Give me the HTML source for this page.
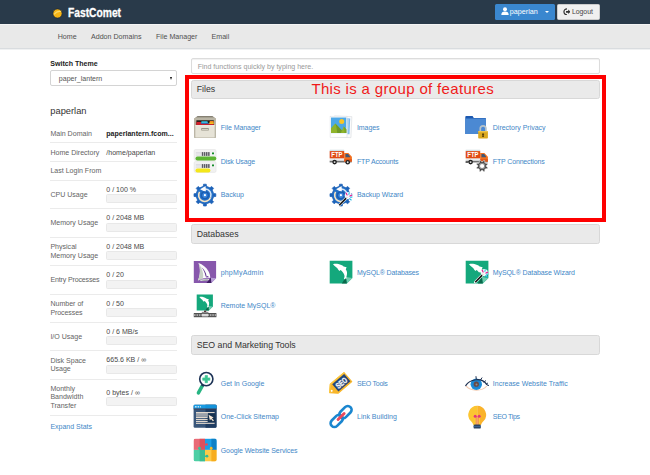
<!DOCTYPE html>
<html><head><meta charset="utf-8"><title>cPanel</title>
<style>
*{box-sizing:border-box;margin:0;padding:0}
html,body{width:650px;height:475px;overflow:hidden;background:#fff}
body{position:relative;font-family:"Liberation Sans",sans-serif;font-size:7.05px;color:#333}
.a{position:absolute;white-space:nowrap;line-height:1}
#top{left:0;top:0;width:650px;height:24px;background:#293a4a}
#nav{left:0;top:24px;width:650px;height:25.4px;background:#e9e9e9;border-top:1px solid #f4f4f4;border-bottom:1px solid #d9dcdf;box-shadow:0 1px 0 #f0f1f2}
.navi{top:33.6px;font-size:7.1px;color:#505050}
#logo{left:68.4px;top:7.1px;font-size:12px;font-weight:bold;color:#fff;transform:scaleX(0.855);transform-origin:0 0;-webkit-text-stroke:0.3px #fff}
#ubtn{left:495.2px;top:3.6px;width:59.8px;height:16px;background:#3a87cf;border-radius:1.5px;color:#fff}
#lbtn{left:556.7px;top:3.6px;width:43.2px;height:16.3px;background:#f0f0f0;border:1px solid #ccc;border-radius:1.5px;color:#333}
.hd{left:190.7px;width:409.3px;height:19px;background:#eaeaea;border:1px solid #d8d8d8;border-radius:2.5px;font-size:8.75px;color:#333;padding:4.3px 0 0 5px}
.lk{color:#4287c7;font-size:7.0px}
.sep{left:50px;width:127px;height:1px;background:#ebebeb}
.bar{left:106.2px;width:70.5px;height:9px;background:#f3f3f3;border:0.5px solid #e8e8e8;border-radius:1.5px;}
.lb{left:50.4px;color:#646464;font-size:7.05px;line-height:8.6px;white-space:normal;width:56px}
.vl{left:106.3px;color:#484848;font-size:7.05px}
svg.ic{position:absolute;width:24px;height:24px;overflow:visible}
</style></head><body>
<div class="a" id="top"></div>
<div class="a" id="nav"></div>
<svg class="a" style="left:51.5px;top:7.6px" width="11" height="11" viewBox="0 0 11 11"><circle cx="5.5" cy="5.5" r="4.6" fill="#f7b515" stroke="#1b2836" stroke-width="0.7"/><path d="M2 6.5 Q5 2.5 9 3.5" stroke="#fbd96a" stroke-width="1.2" fill="none"/></svg>
<div class="a" id="logo">FastComet</div>
<div class="a" id="ubtn"><svg class="a" style="left:5.5px;top:3.5px" width="8" height="8" viewBox="0 0 8 8"><circle cx="4" cy="2.2" r="2" fill="#fff"/><path d="M0.3 8 Q0.3 4.6 4 4.6 Q7.7 4.6 7.7 8Z" fill="#fff"/></svg><span class="a" style="left:14.6px;top:4.6px;font-size:7.2px">paperlan</span><span class="a" style="left:50px;top:7px;width:0;height:0;border-left:2px solid transparent;border-right:2px solid transparent;border-top:2.2px solid #fff"></span></div>
<div class="a" id="lbtn"><svg class="a" style="left:5px;top:3.2px" width="7.6" height="7.6" viewBox="0 0 8 8"><path d="M4.2 0.8 A3.2 3.2 0 1 0 4.2 7.2" stroke="#333" stroke-width="1.3" fill="none"/><path d="M3.2 3.1 H5.5 V1.6 L8 4 L5.5 6.4 V4.9 H3.2Z" fill="#333"/></svg><span class="a" style="left:14.2px;top:4.7px;font-size:6.9px;color:#444">Logout</span></div>
<div class="a navi" style="left:57.7px">Home</div>
<div class="a navi" style="left:91px">Addon Domains</div>
<div class="a navi" style="left:156px">File Manager</div>
<div class="a navi" style="left:211.5px">Email</div>

<!-- sidebar -->
<div class="a" style="left:50.3px;top:60px;font-weight:bold;font-size:7.05px;color:#222">Switch Theme</div>
<div class="a" style="left:50.3px;top:70.2px;width:126.5px;height:16.2px;border:1px solid #d4d4d4;border-radius:2px;background:#fff"><span class="a" style="left:7.5px;top:4.2px;font-size:7.05px;color:#555">paper_lantern</span><span class="a" style="left:119.2px;top:5.4px;width:0;height:0;border-left:1.7px solid transparent;border-right:1.7px solid transparent;border-top:3.4px solid #111"></span></div>
<div class="a" style="left:50.3px;top:106.6px;font-size:9.3px;color:#333">paperlan</div>

<div class="a lb" style="top:130.13px;width:auto;white-space:nowrap;line-height:1">Main Domain</div>
<div class="a vl" style="top:130.13px;font-weight:bold;color:#222">paperlantern.fcom...</div>
<div class="a sep" style="top:142.3px"></div>
<div class="a lb" style="top:149.13px;width:auto;white-space:nowrap;line-height:1">Home Directory</div>
<div class="a vl" style="top:149.13px">/home/paperlan</div>
<div class="a sep" style="top:161.3px"></div>
<div class="a lb" style="top:167.13px;width:auto;white-space:nowrap;line-height:1">Last Login From</div>
<div class="a sep" style="top:179.7px"></div>
<div class="a lb" style="top:191.13px;width:auto;white-space:nowrap;line-height:1">CPU Usage</div>
<div class="a vl" style="top:186.13px">0 / 100 %</div>
<div class="a bar" style="top:194.4px"></div>
<div class="a sep" style="top:208.3px"></div>
<div class="a lb" style="top:219.13px;width:auto;white-space:nowrap;line-height:1">Memory Usage</div>
<div class="a vl" style="top:214.13px">0 / 2048 MB</div>
<div class="a bar" style="top:222.9px"></div>
<div class="a sep" style="top:236.7px"></div>
<div class="a lb" style="top:243.13px;width:auto;white-space:nowrap;line-height:1">Physical</div>
<div class="a lb" style="top:252.13px;width:auto;white-space:nowrap;line-height:1">Memory Usage</div>
<div class="a vl" style="top:243.13px">0 / 2048 MB</div>
<div class="a bar" style="top:251.3px"></div>
<div class="a sep" style="top:265.2px"></div>
<div class="a lb" style="top:276.13px;width:auto;white-space:nowrap;line-height:1;letter-spacing:-0.15px">Entry Processes</div>
<div class="a vl" style="top:271.13px">0 / 20</div>
<div class="a bar" style="top:279.6px"></div>
<div class="a sep" style="top:293.6px"></div>
<div class="a lb" style="top:300.13px;width:auto;white-space:nowrap;line-height:1">Number of</div>
<div class="a lb" style="top:309.13px;width:auto;white-space:nowrap;line-height:1;letter-spacing:-0.1px">Processes</div>
<div class="a vl" style="top:300.13px">0 / 50</div>
<div class="a bar" style="top:308px"></div>
<div class="a sep" style="top:322px"></div>
<div class="a lb" style="top:333.13px;width:auto;white-space:nowrap;line-height:1">I/O Usage</div>
<div class="a vl" style="top:328.13px">0 / 6 MB/s</div>
<div class="a bar" style="top:336.3px"></div>
<div class="a sep" style="top:350.3px"></div>
<div class="a lb" style="top:357.13px;width:auto;white-space:nowrap;line-height:1">Disk Space</div>
<div class="a lb" style="top:365.13px;width:auto;white-space:nowrap;line-height:1">Usage</div>
<div class="a vl" style="top:356.13px">665.6 KB / ∞</div>
<div class="a bar" style="top:364.6px"></div>
<div class="a sep" style="top:378.8px"></div>
<div class="a lb" style="top:385.13px;width:auto;white-space:nowrap;line-height:1">Monthly</div>
<div class="a lb" style="top:393.13px;width:auto;white-space:nowrap;line-height:1">Bandwidth</div>
<div class="a lb" style="top:402.13px;width:auto;white-space:nowrap;line-height:1">Transfer</div>
<div class="a vl" style="top:389.13px">0 bytes / ∞</div>
<div class="a bar" style="top:397.4px"></div>
<div class="a sep" style="top:415.2px"></div>
<div class="a lk" style="left:50.4px;top:423.17px">Expand Stats</div>

<!-- main -->
<div class="a" style="left:190.7px;top:57.9px;width:409.3px;height:16.2px;border:1px solid #dcdcdc;border-radius:2px;background:#fff;box-shadow:inset 0 1px 1px rgba(0,0,0,.06)"><span class="a" style="left:6px;top:4.1px;font-size:7.05px;color:#999">Find functions quickly by typing here.</span></div>

<div class="a hd" style="top:79.9px;height:19.2px">Files</div>
<div class="a" style="left:185px;top:75px;width:421px;height:147px;border:4px solid #fe0000"></div>
<div class="a" style="left:311.4px;top:80.5px;font-size:15px;color:#f01a1a;letter-spacing:0.34px">This is a group of features</div>

<div class="a hd" style="top:224.2px;height:20px;padding-top:4.8px">Databases</div>
<div class="a hd" style="top:335.2px;height:19.8px;padding-top:4.7px">SEO and Marketing Tools</div>

<svg class="ic" style="left:193.3px;top:114.8px" viewBox="0 0 24 24"><path d="M4.6 1.2 H19.4 L22.9 3.6 V22.2 Q22.9 23.1 22 23.1 H2 Q1.1 23.1 1.1 22.2 V3.6Z" fill="#b4af9e"/>
<path d="M4.6 1.2 H19.4 L21.4 2.6 H2.6Z" fill="#6f6a5d"/>
<path d="M2.6 2.6 H21.4 L22.9 3.6 V5.6 H1.1 V3.6Z" fill="#bab5a5"/>
<rect x="3.4" y="5.3" width="17.4" height="5" fill="#1d1714"/>
<rect x="3.4" y="6.9" width="4.6" height="3.2" fill="#d3202b"/>
<rect x="8.2" y="6.3" width="6.6" height="2.2" rx="0.8" fill="#35c6e8"/>
<rect x="8" y="7.9" width="9" height="1.4" fill="#3a62a8"/>
<rect x="16.6" y="5.9" width="4.2" height="2" rx="0.6" fill="#f08a1d"/>
<rect x="16.2" y="7.6" width="4.6" height="1.5" fill="#f5d020"/>
<rect x="3.4" y="8.9" width="17.4" height="1.4" fill="#c9202b"/>
<rect x="2.3" y="10.2" width="19.4" height="12.3" rx="0.6" fill="#e6e3d7"/>
<rect x="2.3" y="10.2" width="19.4" height="1" fill="#f3f1e8"/>
<rect x="8.3" y="12.9" width="7.4" height="2.5" rx="0.5" fill="#8f8b7e"/>
<rect x="8.9" y="13.9" width="6.2" height="1.3" fill="#d2cfc2"/></svg>
<div class="a lk" style="left:220.7px;top:124.17px;letter-spacing:-0.055px">File Manager</div>
<svg class="ic" style="left:329.2px;top:115.1px" viewBox="0 0 24 24"><g transform="rotate(2.5 12 12)"><rect x="5" y="1.2" width="17.4" height="21" fill="#fbfbfc" stroke="#cfd3d8" stroke-width="0.5"/><rect x="6.2" y="3" width="14.6" height="15.8" fill="#7fbaec"/><rect x="18" y="3" width="1.4" height="15.8" fill="#b9daf5"/></g>
<rect x="1.1" y="1.2" width="16.9" height="21" fill="#fff" stroke="#d5d9dd" stroke-width="0.5"/>
<rect x="2" y="2.5" width="15.3" height="15.6" fill="#4da8e8"/>
<circle cx="12.7" cy="6.4" r="2.5" fill="#fbc524"/>
<path d="M2 18.1 V13.2 L6.3 8.4 L9.2 11.6 L12.9 15.4 L14.8 11.6 L17.3 14.6 V18.1Z" fill="#8fb42c"/>
<path d="M6.3 8.4 L9.2 11.6 L12.9 15.4 L11.8 18.1 H8.2 L7.4 12Z" fill="#6f9a28"/>
<path d="M14.8 11.6 L17.3 14.6 V18.1 H15.6Z" fill="#7aa52a"/></svg>
<div class="a lk" style="left:357.0px;top:124.17px;letter-spacing:-0.078px">Images</div>
<svg class="ic" style="left:465.2px;top:115.1px" viewBox="0 0 24 24"><path d="M0.9 1.1 H7.6 L8.8 2.9 H20.8 V18.9 H0.3 V1.7Z" fill="#1c58b0"/>
<rect x="0.3" y="3.6" width="20.5" height="15.3" rx="0.5" fill="#4b89d3"/>
<path d="M15.3 16.6 V13.6 A2.8 2.8 0 0 1 20.9 13.6 V16.6" fill="none" stroke="#b7c2c8" stroke-width="1.7"/>
<rect x="13.2" y="16" width="9.7" height="7.6" rx="0.8" fill="#dba91f"/>
<rect x="13.2" y="16" width="9.7" height="1.3" rx="0.6" fill="#eec64b"/>
<path d="M18.05 18.3 a1.1 1.1 0 0 1 0.6 2 L19 22 H17.1 L17.45 20.3 a1.1 1.1 0 0 1 0.6 -2Z" fill="#5a4308"/></svg>
<div class="a lk" style="left:492.8px;top:124.17px;letter-spacing:-0.006px">Directory Privacy</div>
<svg class="ic" style="left:193.3px;top:149.4px" viewBox="0 0 24 24"><rect x="1.1" y="0.5" width="22" height="10.9" rx="1.4" fill="#f1f1f1" stroke="#dcdcdc" stroke-width="0.4"/>
<g fill="#d6d6dc"><rect x="2.8" y="3.2" width="5.6" height="0.7"/><rect x="2.8" y="4.5" width="5.6" height="0.7"/><rect x="2.8" y="5.8" width="5.6" height="0.7"/></g>
<g fill="#5a5a62"><rect x="8.8" y="3.1" width="1.5" height="3.8"/><rect x="10.9" y="3.1" width="1.5" height="3.8"/><rect x="13" y="3.1" width="1.5" height="3.8"/><rect x="15.1" y="3.1" width="1.5" height="3.8"/></g>
<circle cx="20" cy="4.4" r="1.6" fill="#fff"/><circle cx="20" cy="4.4" r="1.1" fill="#168a2a"/>
<rect x="2.5" y="7.5" width="20.8" height="3.9" rx="1.9" fill="#5db533"/>

<rect x="1.1" y="12.5" width="22" height="10.9" rx="1.4" fill="#f1f1f1" stroke="#dcdcdc" stroke-width="0.4"/>
<g fill="#d6d6dc"><rect x="2.8" y="15.2" width="5.6" height="0.7"/><rect x="2.8" y="16.5" width="5.6" height="0.7"/><rect x="2.8" y="17.8" width="5.6" height="0.7"/></g>
<g fill="#5a5a62"><rect x="8.8" y="15.1" width="1.5" height="3.8"/><rect x="10.9" y="15.1" width="1.5" height="3.8"/><rect x="13" y="15.1" width="1.5" height="3.8"/><rect x="15.1" y="15.1" width="1.5" height="3.8"/></g>
<circle cx="20" cy="16.4" r="1.6" fill="#fff"/><circle cx="20" cy="16.4" r="1.1" fill="#168a2a"/>
<rect x="2.5" y="19.5" width="14.9" height="3.9" rx="1.9" fill="#f4e71a"/></svg>
<div class="a lk" style="left:220.7px;top:158.17px;letter-spacing:-0.160px">Disk Usage</div>
<svg class="ic" style="left:329.2px;top:149.4px" viewBox="0 0 24 24"><rect x="0.7" y="0.8" width="14.5" height="12.4" fill="#ececec"/>
<rect x="0.7" y="0.8" width="14.5" height="1.3" fill="#d3e3ea"/>
<rect x="0.7" y="11.2" width="14.5" height="1.3" fill="#cdcdcd"/>
<rect x="0.7" y="12.4" width="22" height="0.9" fill="#2a2a2a"/>
<path d="M15.2 3.9 H19.4 L22.9 7.8 V12.6 H15.2Z" fill="#f2701f"/>
<path d="M15.2 10.2 H22.9 V12.6 H15.2Z" fill="#dd5519"/>
<path d="M16.5 5.1 H19.1 L21 7.6 V8.3 H16.5Z" fill="#3f5878"/>
<rect x="0.7" y="2.1" width="14.5" height="7.2" fill="#e04b14"/>
<text x="7.9" y="8.3" font-family="Liberation Sans,sans-serif" font-size="6.6" font-weight="bold" fill="#fff" text-anchor="middle" textLength="11.2" lengthAdjust="spacingAndGlyphs">FTP</text>
<circle cx="5.6" cy="13.1" r="2.3" fill="#1f1f1f"/><circle cx="5.6" cy="13.1" r="0.95" fill="#e8e8e8"/>
<circle cx="18.7" cy="13.2" r="2.3" fill="#1f1f1f"/><circle cx="18.7" cy="13.2" r="0.95" fill="#e8e8e8"/></svg>
<div class="a lk" style="left:357.0px;top:158.17px;letter-spacing:-0.171px">FTP Accounts</div>
<svg class="ic" style="left:465.2px;top:149.4px" viewBox="0 0 24 24"><rect x="0.7" y="0.8" width="14.5" height="12.4" fill="#ececec"/>
<rect x="0.7" y="0.8" width="14.5" height="1.3" fill="#d3e3ea"/>
<rect x="0.7" y="11.2" width="14.5" height="1.3" fill="#cdcdcd"/>
<rect x="0.7" y="12.4" width="22" height="0.9" fill="#2a2a2a"/>
<path d="M15.2 3.9 H19.4 L22.9 7.8 V12.6 H15.2Z" fill="#f2701f"/>
<path d="M15.2 10.2 H22.9 V12.6 H15.2Z" fill="#dd5519"/>
<path d="M16.5 5.1 H19.1 L21 7.6 V8.3 H16.5Z" fill="#3f5878"/>
<rect x="0.7" y="2.1" width="14.5" height="7.2" fill="#e04b14"/>
<text x="7.9" y="8.3" font-family="Liberation Sans,sans-serif" font-size="6.6" font-weight="bold" fill="#fff" text-anchor="middle" textLength="11.2" lengthAdjust="spacingAndGlyphs">FTP</text>
<circle cx="5.6" cy="13.1" r="2.3" fill="#1f1f1f"/><circle cx="5.6" cy="13.1" r="0.95" fill="#e8e8e8"/>


<path d="M0.6 13.3 H3" stroke="#2b2b2b" stroke-width="0.8"/>
<path d="M21.52 17.84 L22.78 18.60 L22.25 19.88 L20.82 19.53 L19.63 20.72 L19.98 22.15 L18.70 22.68 L17.94 21.42 L16.26 21.42 L15.50 22.68 L14.22 22.15 L14.57 20.72 L13.38 19.53 L11.95 19.88 L11.42 18.60 L12.68 17.84 L12.68 16.16 L11.42 15.40 L11.95 14.12 L13.38 14.47 L14.57 13.28 L14.22 11.85 L15.50 11.32 L16.26 12.58 L17.94 12.58 L18.70 11.32 L19.98 11.85 L19.63 13.28 L20.82 14.47 L22.25 14.12 L22.78 15.40 L21.52 16.16Z" fill="#444" stroke="#fff" stroke-width="0.5"/>
<circle cx="17.1" cy="17.0" r="3.3" fill="#8a8a8a"/>
<circle cx="17.1" cy="17.0" r="2.1" fill="#fff"/></svg>
<div class="a lk" style="left:492.8px;top:158.17px;letter-spacing:-0.150px">FTP Connections</div>
<svg class="ic" style="left:193.3px;top:182.7px" viewBox="0 0 24 24"><path d="M20.66 10.50 L22.81 10.72 L22.81 13.48 L20.66 13.70 L19.22 17.16 L20.59 18.84 L18.64 20.79 L16.96 19.42 L13.50 20.86 L13.28 23.01 L10.52 23.01 L10.30 20.86 L6.84 19.42 L5.16 20.79 L3.21 18.84 L4.58 17.16 L3.14 13.70 L0.99 13.48 L0.99 10.72 L3.14 10.50 L4.58 7.04 L3.21 5.36 L5.16 3.41 L6.84 4.78 L10.30 3.34 L10.52 1.19 L13.28 1.19 L13.50 3.34 L16.96 4.78 L18.64 3.41 L20.59 5.36 L19.22 7.04Z" fill="#1c62b8" stroke="#1c62b8" stroke-width="0.7" stroke-linejoin="round"/>
<circle cx="11.9" cy="12.1" r="8.2" fill="#2571c7"/>
<path d="M11.9 5.9 A6.2 6.2 0 0 1 17.6 14.5" fill="none" stroke="#d6e6f7" stroke-width="1.5"/>
<path d="M17.6 14.5 A6.2 6.2 0 1 1 6.6 8.9" fill="none" stroke="#f7e4c4" stroke-width="1.6"/>
<path d="M12.6 3.1 L7.1 6.3 L12.9 9.2Z" fill="#fafbfd"/>
<circle cx="11.9" cy="12.3" r="4.1" fill="#1a5db2"/>
<circle cx="11.9" cy="12.3" r="2.6" fill="#3b86dc"/>
<circle cx="11.9" cy="12.2" r="1.1" fill="#fff"/></svg>
<div class="a lk" style="left:220.7px;top:191.17px;letter-spacing:-0.010px">Backup</div>
<svg class="ic" style="left:329.2px;top:182.7px" viewBox="0 0 24 24"><path d="M20.66 10.50 L22.81 10.72 L22.81 13.48 L20.66 13.70 L19.22 17.16 L20.59 18.84 L18.64 20.79 L16.96 19.42 L13.50 20.86 L13.28 23.01 L10.52 23.01 L10.30 20.86 L6.84 19.42 L5.16 20.79 L3.21 18.84 L4.58 17.16 L3.14 13.70 L0.99 13.48 L0.99 10.72 L3.14 10.50 L4.58 7.04 L3.21 5.36 L5.16 3.41 L6.84 4.78 L10.30 3.34 L10.52 1.19 L13.28 1.19 L13.50 3.34 L16.96 4.78 L18.64 3.41 L20.59 5.36 L19.22 7.04Z" fill="#1c62b8" stroke="#1c62b8" stroke-width="0.7" stroke-linejoin="round"/>
<circle cx="11.9" cy="12.1" r="8.2" fill="#2571c7"/>
<path d="M11.9 5.9 A6.2 6.2 0 0 1 17.6 14.5" fill="none" stroke="#d6e6f7" stroke-width="1.5"/>
<path d="M17.6 14.5 A6.2 6.2 0 1 1 6.6 8.9" fill="none" stroke="#f7e4c4" stroke-width="1.6"/>
<path d="M12.6 3.1 L7.1 6.3 L12.9 9.2Z" fill="#fafbfd"/>
<circle cx="11.9" cy="12.3" r="4.1" fill="#1a5db2"/>
<circle cx="11.9" cy="12.3" r="2.6" fill="#3b86dc"/>
<circle cx="11.9" cy="12.2" r="1.1" fill="#fff"/>

<circle cx="19.3" cy="12.6" r="3.6" fill="#fff" opacity="0.93"/>
<path d="M10.2 22.2 L18.3 14" stroke="#fff" stroke-width="2.5" stroke-linecap="round"/>
<path d="M10.2 22.2 L17.2 15.1" stroke="#141414" stroke-width="1.5" stroke-linecap="butt"/>
<path d="M17.2 15.1 L18.4 13.9" stroke="#d9d9d9" stroke-width="1.5"/>
<g stroke-width="1.15" stroke-linecap="round"><path d="M17.2 10.2 L18.1 12" stroke="#e6178f"/><path d="M20.3 9.7 L19.9 11.4" stroke="#3cc4ee"/><path d="M22.6 12.2 L21 13.1" stroke="#e6178f"/><path d="M22.9 14.2 L21.6 14.4" stroke="#3cc4ee"/><path d="M22.2 17 L20.6 15.8" stroke="#22b8e8"/></g></svg>
<div class="a lk" style="left:357.0px;top:191.17px;letter-spacing:-0.068px">Backup Wizard</div>
<svg class="ic" style="left:193.3px;top:260.0px" viewBox="0 0 24 24"><path d="M0.8 0.9 H23.1 V18.2 L18.3 23 H0.8Z" fill="#8757ac"/>
<path d="M23.1 18.2 L18.3 23 L17.9 17.8Z" fill="#b9a0d8"/>
<path d="M18.3 23 L17.9 17.8 L13.4 23Z" fill="#3f1e63"/>
<path d="M5.5 3 C9.5 4.2 13.4 7.4 15.6 11.4 C16.8 13.6 17.3 15.8 17.2 18 C13.8 17.2 8.6 18 4.9 20.4 C7.4 15.2 7.6 8.6 5.5 3Z" fill="#fbfbfc"/>
<path d="M5.5 3 C8.6 7.6 10.6 12.8 10.2 16.4 C10 18 9.2 19 8.1 19.6 L4.9 20.4 C7.4 15.2 7.6 8.6 5.5 3Z" fill="#c6cfc4"/>
<path d="M8.4 7.2 C11.2 9.4 13.2 12.6 13.6 16.2 L12.6 16.4 C12.2 13 10.6 9.8 8.4 7.2Z" fill="#5b2d8a"/>
<path d="M13 16.6 C13.8 15.6 15.2 15.8 15.8 17 L13.4 17.6Z" fill="#6a3a9a"/>
<path d="M6.6 20.4 C9.6 18.6 13.6 18.4 16.4 19 C15.6 21 9.4 21.8 6.6 20.4Z" fill="#dcdde0"/>
<path d="M8.2 20.2 C10.4 19.4 13 19.3 15 19.6 L14.4 20.4 C12.4 20.8 10 20.8 8.2 20.2Z" fill="#8b8f96"/></svg>
<div class="a lk" style="left:220.7px;top:269.17px;letter-spacing:0.194px">phpMyAdmin</div>
<svg class="ic" style="left:329.2px;top:260.0px" viewBox="0 0 24 24"><path d="M0.7 0.8 H23.4 V17.9 L17.799999999999997 23.5 H0.7Z" fill="#14a87c"/>
<path d="M23.4 17.9 L17.799999999999997 23.5 L16.96 17.060000000000002Z" fill="#6fcdb0"/>
<path d="M17.799999999999997 23.5 L16.96 17.060000000000002 L12.76 23.5Z" fill="#0a684b"/>
<g transform="translate(0,0) scale(1.0)">
<path d="M4 4.2 C5.6 3.7 7.6 3.8 9.4 4.1 C11.4 4.5 13.2 5.4 14.6 6.5 L17.6 7.2 C17.2 8 16.9 8.8 16.8 9.6 C17.8 11 18.2 12.4 18 13.8 C17.9 15 17.7 16.2 17.3 17.2 L17.8 18.6 L16.4 18.4 L15.4 19.6 L15 18.4 C15.6 17.4 15.7 16.4 15.4 15.3 C15.1 14.1 14.6 13.1 13.8 12.2 C13.2 11.4 12.4 10.6 11.6 9.9 L10.3 10.9 C10 10.4 9.6 9.9 9.1 9.5 C8.8 9 8.5 8.5 8.2 8 C7.4 7.6 6.8 7.1 6.3 6.5 C5.5 5.8 4.7 5 4 4.2Z" fill="#fff"/>
</g></svg>
<div class="a lk" style="left:357.0px;top:269.17px;letter-spacing:-0.119px">MySQL® Databases</div>
<svg class="ic" style="left:465.2px;top:260.0px" viewBox="0 0 24 24"><path d="M0.7 0.8 H23.4 V17.9 L17.799999999999997 23.5 H0.7Z" fill="#14a87c"/>
<path d="M23.4 17.9 L17.799999999999997 23.5 L16.96 17.060000000000002Z" fill="#6fcdb0"/>
<path d="M17.799999999999997 23.5 L16.96 17.060000000000002 L12.76 23.5Z" fill="#0a684b"/>
<path d="M4 4.2 C5.6 3.7 7.6 3.8 9.4 4.1 C11.4 4.5 13.2 5.4 14.6 6.5 L17.6 7.2 C17.2 8 16.9 8.8 16.8 9.6 C17.4 10.6 17.8 11.6 18 12.6 L13.8 12.2 C13.2 11.4 12.4 10.6 11.6 9.9 L10.3 10.9 C10 10.4 9.6 9.9 9.1 9.5 C8.8 9 8.5 8.5 8.2 8 C7.4 7.6 6.8 7.1 6.3 6.5 C5.5 5.8 4.7 5 4 4.2Z" fill="#fff"/>
<circle cx="19.3" cy="12.6" r="3.6" fill="#fff" opacity="0.93"/>
<path d="M10.2 22.2 L18.3 14" stroke="#fff" stroke-width="2.5" stroke-linecap="round"/>
<path d="M10.2 22.2 L17.2 15.1" stroke="#141414" stroke-width="1.5" stroke-linecap="butt"/>
<path d="M17.2 15.1 L18.4 13.9" stroke="#d9d9d9" stroke-width="1.5"/>
<g stroke-width="1.15" stroke-linecap="round"><path d="M17.2 10.2 L18.1 12" stroke="#e6178f"/><path d="M20.3 9.7 L19.9 11.4" stroke="#3cc4ee"/><path d="M22.6 12.2 L21 13.1" stroke="#e6178f"/><path d="M22.9 14.2 L21.6 14.4" stroke="#3cc4ee"/><path d="M22.2 17 L20.6 15.8" stroke="#22b8e8"/></g></svg>
<div class="a lk" style="left:492.8px;top:269.17px;letter-spacing:-0.097px">MySQL® Database Wizard</div>
<svg class="ic" style="left:193.3px;top:293.8px" viewBox="0 0 24 24"><path d="M3.7 0.4 H19.9 V12.599999999999998 L15.899999999999999 16.599999999999998 H3.7Z" fill="#14a87c"/>
<path d="M19.9 12.599999999999998 L15.899999999999999 16.599999999999998 L15.299999999999999 11.999999999999998Z" fill="#6fcdb0"/>
<path d="M15.899999999999999 16.599999999999998 L15.299999999999999 11.999999999999998 L12.299999999999999 16.599999999999998Z" fill="#0a684b"/>
<g transform="translate(3.5,0.1) scale(0.7)">
<path d="M4 4.2 C5.6 3.7 7.6 3.8 9.4 4.1 C11.4 4.5 13.2 5.4 14.6 6.5 L17.6 7.2 C17.2 8 16.9 8.8 16.8 9.6 C17.8 11 18.2 12.4 18 13.8 C17.9 15 17.7 16.2 17.3 17.2 L17.8 18.6 L16.4 18.4 L15.4 19.6 L15 18.4 C15.6 17.4 15.7 16.4 15.4 15.3 C15.1 14.1 14.6 13.1 13.8 12.2 C13.2 11.4 12.4 10.6 11.6 9.9 L10.3 10.9 C10 10.4 9.6 9.9 9.1 9.5 C8.8 9 8.5 8.5 8.2 8 C7.4 7.6 6.8 7.1 6.3 6.5 C5.5 5.8 4.7 5 4 4.2Z" fill="#fff"/>
</g>
<rect x="11" y="16.6" width="2.2" height="3" fill="#4a2a2a"/>
<rect x="8.8" y="17.8" width="6.6" height="1.6" fill="#8a8a8a"/>
<rect x="0.8" y="19.1" width="22.6" height="4.1" fill="#3f3f3f"/>
<rect x="0.8" y="20.1" width="22.6" height="2.1" fill="#a9a9a9"/>
<g fill="#555"><rect x="2.6" y="20.1" width="0.9" height="2.1"/><rect x="5" y="20.1" width="0.9" height="2.1"/><rect x="7.4" y="20.1" width="0.9" height="2.1"/><rect x="16" y="20.1" width="0.9" height="2.1"/><rect x="18.4" y="20.1" width="0.9" height="2.1"/><rect x="20.8" y="20.1" width="0.9" height="2.1"/></g>
<rect x="9" y="19.8" width="6" height="2.6" fill="#d9d9d9"/></svg>
<div class="a lk" style="left:220.7px;top:302.17px;letter-spacing:-0.019px">Remote MySQL®</div>
<svg class="ic" style="left:193.3px;top:371.0px" viewBox="0 0 24 24"><path d="M9.4 14.6 L5.4 21.9" stroke="#27b583" stroke-width="3.5" stroke-linecap="round"/>
<path d="M10.2 13.4 L9.2 15.2" stroke="#21395c" stroke-width="2.6"/>
<circle cx="13.3" cy="8.1" r="6.6" fill="#fff" stroke="#1d3356" stroke-width="1.6"/>
<path d="M12.1 4.5 H14.5 V6.9 H16.9 V9.3 H14.5 V11.7 H12.1 V9.3 H9.7 V6.9 H12.1Z" fill="#3cc492" stroke="#3cc492" stroke-width="0.6" stroke-linejoin="round"/></svg>
<div class="a lk" style="left:220.7px;top:380.17px;letter-spacing:0.000px">Get In Google</div>
<svg class="ic" style="left:329.2px;top:371.0px" viewBox="0 0 24 24"><g transform="translate(9.9,13.75) rotate(-40.3)">
<path d="M-12.2 0 L-6.2 -6 H11.8 V6 H-6.2Z" fill="#f8b62a" stroke="#f8b62a" stroke-width="1" stroke-linejoin="round"/>
<path d="M-12.2 0 L-6.2 -6 H11.8" fill="none" stroke="#fccb45" stroke-width="1" stroke-linejoin="round"/>
<rect x="-4.7" y="-4.8" width="15.7" height="9.6" fill="#23467a"/>
<circle cx="-9.4" cy="0" r="1" fill="#fff"/>
<text x="3.15" y="2.9" font-family="Liberation Sans,sans-serif" font-size="8" font-weight="bold" fill="#f4f4f6" stroke="#f4f4f6" stroke-width="0.35" text-anchor="middle" textLength="12.4" lengthAdjust="spacingAndGlyphs">SEO</text>
</g></svg>
<div class="a lk" style="left:357.0px;top:380.17px;letter-spacing:-0.261px">SEO Tools</div>
<svg class="ic" style="left:465.2px;top:371.5px" viewBox="0 0 24 24"><path d="M0.8 13.5 C5 6.6 17 5.4 22.6 13.2 C17.6 19.8 5.4 19.6 0.8 13.5Z" fill="#fff"/>
<path d="M1 13.9 C5.4 19.4 17 19.6 21.8 14" fill="none" stroke="#f3cbb0" stroke-width="1.1"/>
<circle cx="11.3" cy="12.2" r="5.7" fill="#1b8fdc"/>
<circle cx="11.3" cy="12.2" r="4.3" fill="#1f84cf"/>
<circle cx="11.3" cy="12.2" r="2.6" fill="#6a4a44"/>
<circle cx="11.5" cy="12.4" r="1" fill="#8a8f96"/>
<path d="M0.7 13.6 C4.6 7.4 16.6 4.6 21.6 12.4 L23.4 13.4" fill="none" stroke="#1d3050" stroke-width="1.15" stroke-linecap="round"/>
<path d="M11.2 6.6 L11 4.6 M15.6 7.8 L16.9 5.9 M18.9 10.2 L20.6 8.8 M21.4 12 L22.6 11.2" stroke="#1d3050" stroke-width="1" stroke-linecap="round"/></svg>
<div class="a lk" style="left:492.8px;top:380.17px;letter-spacing:0.007px">Increase Website Traffic</div>
<svg class="ic" style="left:193.3px;top:404.1px" viewBox="0 0 24 24"><rect x="0.6" y="0.8" width="22.9" height="22.9" rx="1.3" fill="#39567a"/>
<path d="M12.5 0.8 H22.2 A1.3 1.3 0 0 1 23.5 2.1 V22.4 A1.3 1.3 0 0 1 22.2 23.7 H12.5Z" fill="#1f3c61"/>
<path d="M0.6 2.1 A1.3 1.3 0 0 1 1.9 0.8 H22.2 A1.3 1.3 0 0 1 23.5 2.1 V4.8 H0.6Z" fill="#1a9be3"/>
<rect x="12.5" y="0.8" width="11" height="4" fill="#0f8dd6" opacity="0.6"/>
<rect x="0.6" y="4.6" width="22.9" height="0.7" fill="#4a3a4a"/>
<g fill="#eaf6fd"><rect x="2" y="2" width="0.8" height="1.5"/><rect x="3.5" y="2" width="0.8" height="1.5"/><rect x="5" y="2" width="0.8" height="1.5"/><rect x="6.9" y="2" width="0.8" height="1.5"/></g>
<rect x="3" y="8.8" width="12" height="4" fill="#9aa1aa"/>
<g fill="#f3e6d6"><rect x="3" y="8.1" width="18.6" height="1"/><rect x="3" y="12.9" width="11.7" height="1"/><rect x="3" y="14.9" width="11.7" height="1"/><rect x="3" y="16.9" width="11.7" height="1"/><rect x="3" y="18.8" width="18.6" height="1"/></g>
<rect x="14.9" y="9.6" width="7.2" height="8.4" fill="#17324f"/>
<path d="M15.6 10.8 L20.6 13.5 L18.9 14.2 L21 16.4 L19.9 17.2 L18 15 L16.9 16.6Z" fill="#f7e7d4"/></svg>
<div class="a lk" style="left:220.7px;top:413.17px;letter-spacing:-0.003px">One-Click Sitemap</div>
<svg class="ic" style="left:329.2px;top:404.0px" viewBox="0 0 24 24"><g transform="translate(12.1,12.5) rotate(-45) scale(0.935) translate(-12,-12)" fill="none" stroke-linecap="round">
<rect x="-2.2" y="7.9" width="15.2" height="8.2" rx="4.1" stroke="#1a86cf" stroke-width="2.8"/>
<rect x="11" y="7.9" width="15.2" height="8.2" rx="4.1" stroke="#1a86cf" stroke-width="2.8"/>
<path d="M7.4 12 H16.6" stroke="#ea4a5e" stroke-width="3.1"/>
</g></svg>
<div class="a lk" style="left:357.0px;top:413.17px;letter-spacing:0.015px">Link Building</div>
<svg class="ic" style="left:465.2px;top:405.0px" viewBox="0 0 24 24"><path d="M12.2 0.8 A9 9 0 0 0 5.6 15.8 C7 17.4 7.8 18.4 8.4 20 H12.2Z" fill="#fcc531"/>
<path d="M12.2 0.8 A9 9 0 0 1 18.8 15.8 C17.4 17.4 16.6 18.4 16 20 H12.2Z" fill="#fab32b"/>
<path d="M9.6 11.6 V20 H14.8 V11.6" fill="#fbd23c"/><path d="M10.6 11.6 V20 H13.8 V11.6" fill="#f08c4e" />
<rect x="11.5" y="11.6" width="1.4" height="8.4" fill="#f6a869"/>
<circle cx="10.2" cy="11.2" r="1.5" fill="#e5357a"/><circle cx="14.2" cy="11.2" r="1.5" fill="#e5357a"/>
<rect x="8.6" y="19.6" width="7.2" height="4" rx="1.2" fill="#2b4565"/>
<rect x="8.6" y="21.2" width="7.2" height="0.8" fill="#3f6aa0"/></svg>
<div class="a lk" style="left:492.8px;top:413.17px;letter-spacing:-0.322px">SEO Tips</div>
<svg class="ic" style="left:193.3px;top:438.3px" viewBox="0 0 24 24"><defs><clipPath id="pzc"><rect x="0.5" y="0.6" width="23.2" height="22.9" rx="2.2"/></clipPath></defs>
<g clip-path="url(#pzc)">
<rect x="0.5" y="0.6" width="11.5" height="11.3" fill="#e96a76"/><rect x="6.6" y="0.6" width="5.4" height="11.3" fill="#dd505e"/>
<rect x="12" y="0.6" width="11.7" height="11.3" fill="#1a9fe8"/><rect x="18.4" y="0.6" width="5.3" height="11.3" fill="#0d80c6"/>
<rect x="0.5" y="11.9" width="11.5" height="11.6" fill="#4dcfa5"/><rect x="6.6" y="11.9" width="5.4" height="11.6" fill="#3cbd92"/>
<rect x="12" y="11.9" width="11.7" height="11.6" fill="#fdca48"/><rect x="18.4" y="11.9" width="5.3" height="11.6" fill="#f7ad1e"/>
<circle cx="13.6" cy="6.5" r="1.35" fill="#e84a58"/><rect x="11.8" y="5.9" width="1.4" height="1.2" fill="#e84a58"/>
<circle cx="6.5" cy="10.2" r="1.35" fill="#35c79a"/><rect x="5.9" y="10.6" width="1.2" height="1.5" fill="#35c79a"/>
<circle cx="18.2" cy="10.2" r="1.35" fill="#f9bd22"/><rect x="17.6" y="10.6" width="1.2" height="1.5" fill="#f9bd22"/>
<circle cx="14" cy="18.2" r="1.35" fill="#2fb99a"/><rect x="11.8" y="17.6" width="1.6" height="1.2" fill="#2fb99a"/>
</g></svg>
<div class="a lk" style="left:220.7px;top:447.17px;letter-spacing:-0.073px">Google Website Services</div>
</body></html>
